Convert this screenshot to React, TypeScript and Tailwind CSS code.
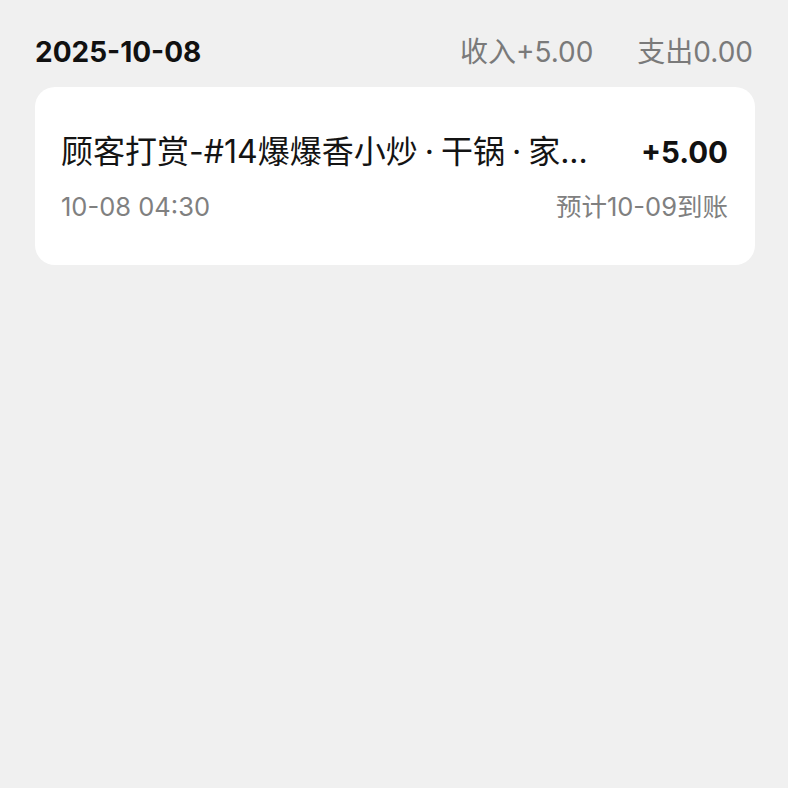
const font = { fontFamily: 'Inter, "Noto Sans CJK SC", sans-serif' };

function Dot() {
  return <span className="mx-[7px]">·</span>;
}

export default function App() {
  return (
    <div className="min-h-[788px] w-full bg-[#f0f0f0] pl-[35px] pr-[33px] pt-[32px]" style={font}>
      <div className="mb-[15px] flex h-[40px] items-center justify-between pr-[2px]">
        <span className="text-[28px] font-bold leading-[40px] text-[#111]">2025-10-08</span>
        <div className="flex items-center gap-[44px] text-[28px] leading-[40px] text-[#7a7a7a]">
          <span>收入+5.00</span>
          <span>支出0.00</span>
        </div>
      </div>

      <div className="rounded-[20px] bg-white pl-[26px] pr-[27px] pt-[45px] pb-[40px]">
        <div className="flex h-[40px] items-center justify-between">
          <span className="text-[32px] leading-[40px] text-[#141414]">
            顾客打赏-#14爆爆香小炒<Dot />干锅<Dot />家...
          </span>
          <span className="text-[29.5px] font-bold leading-[40px] text-[#111]">+5.00</span>
        </div>
        <div className="mt-[17px] flex h-[36px] items-center justify-between text-[25.5px] leading-[36px] text-[#808080]">
          <span>10-08 04:30</span>
          <span>预计10-09到账</span>
        </div>
      </div>
    </div>
  );
}
